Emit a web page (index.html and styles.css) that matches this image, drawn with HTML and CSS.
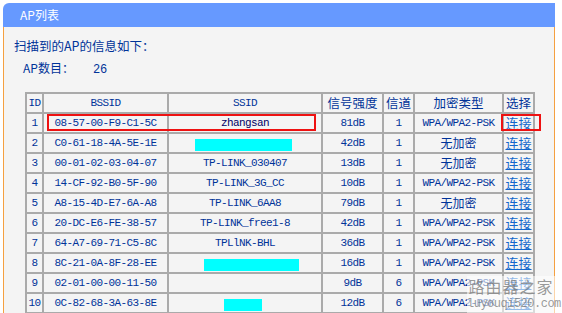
FILE: index.html
```html
<!DOCTYPE html>
<html lang="zh-CN">
<head>
  <meta charset="UTF-8" />
  <meta name="viewport" content="width=device-width, initial-scale=1.0" />
  <title>AP列表</title>
  <link rel="stylesheet" href="styles.css">
</head>
<body>
  <div class="frame">
    <div class="frame-head">AP列表</div>
    <div class="frame-body">
      <p class="lead">扫描到的AP的信息如下：</p>
      <p class="count"><span>AP数目：</span><span class="num">26</span></p>

      <table class="ap-table">
        <tr>
          <th class="c-id mono">ID</th>
          <th class="c-bssid mono">BSSID</th>
          <th class="c-ssid mono">SSID</th>
          <th class="c-sig">信号强度</th>
          <th class="c-ch">信道</th>
          <th class="c-enc">加密类型</th>
          <th class="c-sel">选择</th>
        </tr>
        <tr>
          <td class="mono">1</td><td class="mono">08-57-00-F9-C1-5C</td><td class="mono dark">zhangsan</td>
          <td class="mono">81dB</td><td class="mono">1</td><td class="mono">WPA/WPA2-PSK</td><td><a href="#">连接</a></td>
        </tr>
        <tr>
          <td class="mono">2</td><td class="mono">C0-61-18-4A-5E-1E</td><td><span class="blot b-wide"></span></td>
          <td class="mono">42dB</td><td class="mono">1</td><td>无加密</td><td><a href="#">连接</a></td>
        </tr>
        <tr>
          <td class="mono">3</td><td class="mono">00-01-02-03-04-07</td><td class="mono">TP-LINK_030407</td>
          <td class="mono">13dB</td><td class="mono">1</td><td>无加密</td><td><a href="#">连接</a></td>
        </tr>
        <tr>
          <td class="mono">4</td><td class="mono">14-CF-92-B0-5F-90</td><td class="mono">TP-LINK_3G_CC</td>
          <td class="mono">10dB</td><td class="mono">1</td><td class="mono">WPA/WPA2-PSK</td><td><a href="#">连接</a></td>
        </tr>
        <tr>
          <td class="mono">5</td><td class="mono">A8-15-4D-E7-6A-A8</td><td class="mono">TP-LINK_6AA8</td>
          <td class="mono">79dB</td><td class="mono">1</td><td>无加密</td><td><a href="#">连接</a></td>
        </tr>
        <tr>
          <td class="mono">6</td><td class="mono">20-DC-E6-FE-38-57</td><td class="mono">TP-LINK_free1-8</td>
          <td class="mono">42dB</td><td class="mono">1</td><td class="mono">WPA/WPA2-PSK</td><td><a href="#">连接</a></td>
        </tr>
        <tr>
          <td class="mono">7</td><td class="mono">64-A7-69-71-C5-8C</td><td class="mono">TPLlNK-BHL</td>
          <td class="mono">36dB</td><td class="mono">1</td><td class="mono">WPA/WPA2-PSK</td><td><a href="#">连接</a></td>
        </tr>
        <tr>
          <td class="mono">8</td><td class="mono">8C-21-0A-8F-28-EE</td><td><span class="blot b-right"></span></td>
          <td class="mono">16dB</td><td class="mono">1</td><td class="mono">WPA/WPA2-PSK</td><td><a href="#">连接</a></td>
        </tr>
        <tr>
          <td class="mono">9</td><td class="mono">02-01-00-00-11-50</td><td></td>
          <td class="mono">9dB</td><td class="mono">6</td><td class="mono">WPA/WPA2-PSK</td><td><a href="#">连接</a></td>
        </tr>
        <tr>
          <td class="mono">10</td><td class="mono">0C-82-68-3A-63-8E</td><td><span class="blot b-small"></span></td>
          <td class="mono">12dB</td><td class="mono">6</td><td class="mono">WPA/WPA2-PSK</td><td><a href="#">连接</a></td>
        </tr>
        <tr>
          <td></td><td></td><td></td><td></td><td></td><td></td><td></td>
        </tr>
      </table>
    </div>
  </div>

  <!-- annotations drawn over the screenshot -->
  <div class="mark mark-row"></div>
  <div class="mark mark-link"></div>

  <div class="watermark">
    <div class="wm-name">路由器之家</div>
    <div class="wm-url">luyouqi520.com</div>
  </div>
</body>
</html>
```

FILE: styles.css
```css
html, body {
  overflow: hidden;
}
body {
  margin: 0;
  padding: 0;
  background: #fff;
  font-family: "Noto Sans CJK SC", "Liberation Sans", sans-serif;
  font-size: 12px;
  color: #003399;
  position: relative;
  height: 313px;
}
.frame {
  margin: 3px 0 0 3px;
  width: 552px;
}
.frame-head {
  height: 24px;
  line-height: 23px;
  background: #6699ff;
  border-top-left-radius: 6px;
  color: #fff;
  padding-left: 17px;
  font-size: 12px;
}
.frame-body {
  background: #f4f4f4;
  border-left: 1px solid #f5a040;
  border-right: 1px solid #f5a040;
  height: 300px;
  padding: 12px 0 0 10px;
}
.lead {
  margin: 0;
  line-height: 14px;
  font-size: 12.5px;
}
.count {
  margin: 8px 0 0 9px;
  line-height: 14px;
}
.count .num {
  margin-left: 19px;
  font-family: "Liberation Mono", monospace;
  font-size: 12px;
}
.mono {
  font-family: "Liberation Mono", "DejaVu Sans Mono", monospace;
  font-size: 11px;
  letter-spacing: -0.6px;
}
.dark {
  color: #000066;
  font-weight: bold;
}
.ap-table {
  margin: 15px 0 0 11px;
  border-collapse: separate;
  border-spacing: 0;
  border: 1px solid #aaa;
  table-layout: fixed;
}
.ap-table th,
.ap-table td {
  border: 1px solid #aaa;
  height: 18px;
  padding: 0;
  text-align: center;
  font-weight: normal;
  line-height: 16px;
  white-space: nowrap;
  overflow: hidden;
}
.ap-table th {
  font-size: 12.5px;
}
.ap-table th.mono {
  font-size: 11px;
}
.c-id { width: 15px; }
.c-bssid { width: 123px; }
.c-ssid { width: 152px; }
.c-sig { width: 59px; }
.c-ch { width: 29px; }
.c-enc { width: 87px; }
.c-sel { width: 29px; }
.ap-table a {
  color: #1166cc;
  text-decoration: underline;
  font-size: 13px;
}
.blot {
  display: inline-block;
  height: 12px;
  background: #00ffff;
  vertical-align: middle;
}
.b-wide { width: 97px; margin-right: 3px; }
.b-right { width: 95px; margin-left: 13px; }
.b-small { width: 38px; margin-right: 4px; }

.mark {
  position: absolute;
  border: 2px solid #ee1111;
  box-sizing: border-box;
}
.mark-row {
  left: 47px;
  top: 114px;
  width: 269px;
  height: 17px;
}
.mark-link {
  left: 501px;
  top: 114px;
  width: 40px;
  height: 17px;
}
.watermark {
  position: absolute;
  left: 467px;
  top: 276px;
  width: 88px;
  height: 37px;
  background: rgba(255, 255, 255, 0.55);
  color: rgba(110, 110, 110, 0.7);
  text-align: center;
}
.wm-name {
  font-size: 16px;
  line-height: 20px;
  letter-spacing: 1px;
}
.wm-url {
  font-family: "Liberation Mono", monospace;
  font-size: 12px;
  line-height: 16px;
  letter-spacing: -0.5px;
}
```
